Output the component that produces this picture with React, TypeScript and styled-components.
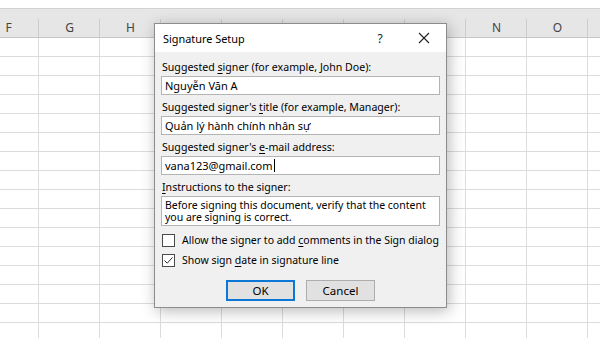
import React from 'react';
import styled, { createGlobalStyle } from 'styled-components';

const GlobalStyle = createGlobalStyle`
  html, body {
    margin: 0;
    padding: 0;
    background: #ffffff;
  }
  body {
    font-family: "Noto Sans", "Open Sans", "Liberation Sans", sans-serif;
    color: #000;
  }
`;

// columns I..M sit under the dialog, their letters never show
const COLUMNS = ['F', 'G', 'H', '', '', '', '', '', 'N', 'O'];
const ROW_COUNT = 16;

// Spreadsheet behind the dialog
const Sheet = styled.div`
  position: relative;
  width: 600px;
  height: 338px;
  overflow: hidden;
  background: #ffffff;
`;

const Ribbon = styled.div`
  height: 8px;
  background: #ffffff;
  border-bottom: 1px solid #d2d2d2;
`;

const HeaderRow = styled.div`
  display: flex;
  height: 28px;
  margin-left: -22px;
  background: #e6e6e6;
  border-bottom: 1px solid #c6c6c6;
`;

const ColumnHeader = styled.div`
  position: relative;
  flex: 0 0 61px;
  display: flex;
  align-items: center;
  justify-content: center;
  padding-top: 9px;
  box-sizing: border-box;
  font-size: 12px;
  color: #444;

  &::after {
    content: '';
    position: absolute;
    right: 0;
    top: 10px;
    bottom: 0;
    width: 1px;
    background: #cdcdcd;
  }
`;

const GridRow = styled.div`
  display: flex;
  height: 19px;
  margin-left: -22px;
  box-sizing: border-box;
  border-bottom: 1px solid #dcdcdc;
`;

const Cell = styled.div`
  flex: 0 0 61px;
  box-sizing: border-box;
  border-right: 1px solid #dcdcdc;
`;

// Dialog
const Dialog = styled.div`
  position: absolute;
  left: 154px;
  top: 23px;
  width: 293px;
  height: 285px;
  box-sizing: border-box;
  border: 1px solid #8c8c8c;
  background: #f0f0f0;
  box-shadow: 2px 3px 14px rgba(0, 0, 0, 0.28);
  display: flex;
  flex-direction: column;
  font-size: 11px;
`;

const TitleBar = styled.div`
  display: flex;
  align-items: center;
  height: 28px;
  padding-left: 8px;
  background: #ffffff;
  font-size: 10.9px;
`;

const Title = styled.span`
  flex: 1;
`;

const TitleButton = styled.span`
  width: 44px;
  display: flex;
  justify-content: center;
  align-items: center;
  color: #222;
  font-size: 12px;
`;

const Body = styled.div`
  flex: 1;
  display: flex;
  flex-direction: column;
  padding: 7px 6px 0 6px;
`;

const FieldGroup = styled.div`
  display: flex;
  flex-direction: column;
  margin-bottom: 4px;
`;

const Label = styled.div`
  height: 16px;
  line-height: 16px;
  margin-bottom: 1px;
  padding-left: 1px;
  white-space: nowrap;
  font-size: 10.6px;

  u {
    text-decoration: underline;
    text-underline-offset: 2px;
  }
`;

const Field = styled.div<{ $tall?: boolean }>`
  height: ${({ $tall }) => ($tall ? 30 : 19)}px;
  box-sizing: border-box;
  border: 1px solid #b4b4b4;
  background: #ffffff;
  padding: ${({ $tall }) => ($tall ? '2px 3px' : '0 3px')};
  font-size: ${({ $tall }) => ($tall ? 10.5 : 11)}px;
  line-height: ${({ $tall }) => ($tall ? '12px' : '17px')};
  white-space: ${({ $tall }) => ($tall ? 'normal' : 'nowrap')};
`;

const Caret = styled.span`
  display: inline-block;
  width: 1px;
  height: 13px;
  margin-left: 1px;
  vertical-align: -2px;
  background: #000;
`;

const CheckRow = styled.div`
  display: flex;
  align-items: center;
  gap: 7px;
  height: 20px;
  padding-left: 1px;
  white-space: nowrap;
  font-size: 10.5px;

  u {
    text-decoration: underline;
    text-underline-offset: 2px;
  }
`;

const Box = styled.span`
  flex: 0 0 13px;
  width: 13px;
  height: 13px;
  box-sizing: border-box;
  border: 1px solid #4a4a4a;
  background: #ffffff;
  display: flex;
  align-items: center;
  justify-content: center;
`;

const Buttons = styled.div`
  display: flex;
  justify-content: center;
  gap: 11px;
  margin-top: 10px;
`;

const Button = styled.div<{ $primary?: boolean }>`
  width: 69px;
  height: 21px;
  box-sizing: border-box;
  display: flex;
  align-items: center;
  justify-content: center;
  background: #e1e1e1;
  border: ${({ $primary }) => ($primary ? '2px solid #0a78d4' : '1px solid #adadad')};
  font-size: 11.5px;
`;

const Checkbox: React.FC<{ checked?: boolean }> = ({ checked }) => (
  <Box>
    {checked && (
      <svg width="11" height="11" viewBox="0 0 11 11">
        <path d="M1.5 5.5 L4.2 8.2 L9.5 2.4" fill="none" stroke="#333" strokeWidth="1" />
      </svg>
    )}
  </Box>
);

const App: React.FC = () => {
  return (
    <>
      <GlobalStyle />
      <Sheet>
        <Ribbon />
        <HeaderRow>
          {COLUMNS.map((c, i) => (
            <ColumnHeader key={i}>{c}</ColumnHeader>
          ))}
        </HeaderRow>
        {Array.from({ length: ROW_COUNT }).map((_, r) => (
          <GridRow key={r}>
            {COLUMNS.map((_c, i) => (
              <Cell key={i} />
            ))}
          </GridRow>
        ))}

        <Dialog>
          <TitleBar>
            <Title>Signature Setup</Title>
            <TitleButton>?</TitleButton>
            <TitleButton>
              <svg width="12" height="12" viewBox="0 0 12 12">
                <path d="M1 1 L11 11 M11 1 L1 11" stroke="#222" strokeWidth="1.1" />
              </svg>
            </TitleButton>
          </TitleBar>
          <Body>
            <FieldGroup>
              <Label>
                Suggested <u>s</u>igner (for example, John Doe):
              </Label>
              <Field>Nguyễn Văn A</Field>
            </FieldGroup>
            <FieldGroup>
              <Label>
                Suggested signer's <u>t</u>itle (for example, Manager):
              </Label>
              <Field>Quản lý hành chính nhân sự</Field>
            </FieldGroup>
            <FieldGroup>
              <Label>
                Suggested signer's <u>e</u>-mail address:
              </Label>
              <Field>
                vana123@gmail.com
                <Caret />
              </Field>
            </FieldGroup>
            <FieldGroup>
              <Label>
                <u>I</u>nstructions to the signer:
              </Label>
              <Field $tall>
                Before signing this document, verify that the content you are signing is correct.
              </Field>
            </FieldGroup>
            <CheckRow>
              <Checkbox />
              <span>
                Allow the signer to add <u>c</u>omments in the Sign dialog
              </span>
            </CheckRow>
            <CheckRow>
              <Checkbox checked />
              <span>
                Show sign <u>d</u>ate in signature line
              </span>
            </CheckRow>
            <Buttons>
              <Button $primary>OK</Button>
              <Button>Cancel</Button>
            </Buttons>
          </Body>
        </Dialog>
      </Sheet>
    </>
  );
};

export default App;
